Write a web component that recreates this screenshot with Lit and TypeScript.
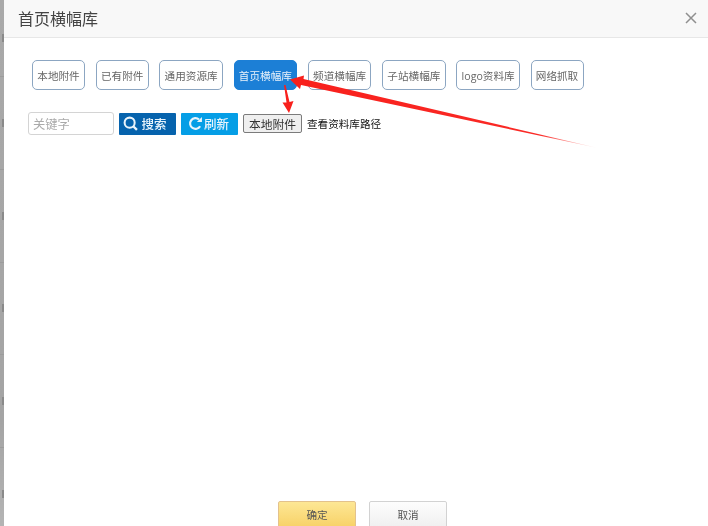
import { LitElement, html, css, svg } from "lit";
import { customElement } from "lit/decorators.js";

const tabs = ["本地附件", "已有附件", "通用资源库", "首页横幅库", "频道横幅库", "子站横幅库", "logo资料库", "网络抓取"];
const sideMarks = [true, true, true, true, true, true, true];

@customElement("app-root")
export class AppRoot extends LitElement {
  static styles = css`
    :host {
      display: block;
      position: relative;
      width: 708px;
      height: 526px;
      overflow: hidden;
      font-family: "Open Sans", "Noto Sans CJK SC", sans-serif;
      background: #fff;
    }
    .page { display: flex; height: 526px; filter: blur(0.3px); }
    .strip {
      width: 4px;
      flex: none;
      overflow: hidden;
      display: flex;
      flex-direction: column;
      background: linear-gradient(#a9a9a9, #a4a4a4 80%, #b4b4b4);
    }
    .strip-row {
      flex: none;
      height: 92.750px;
      box-sizing: border-box;
      border-bottom: 1px solid #9c9c9c;
      display: flex;
      align-items: center;
      justify-content: flex-end;
    }
    .strip-row:first-child { height: 77px; }
    .mark { width: 2px; height: 8px; background: #8a8a8a; }
    .dialog {
      flex: 1;
      min-width: 0;
      display: flex;
      flex-direction: column;
      background: #fff;
    }
    .header {
      height: 38px;
      flex: none;
      box-sizing: border-box;
      background: #f8f8f8;
      border-bottom: 1px solid #e7e7e7;
      display: flex;
      align-items: center;
      justify-content: space-between;
      padding: 0 11px 2px 14px;
    }
    .title { font-size: 16px; color: #444; }
    .close { width: 12px; height: 12px; display: block; }
    .body { flex: 1; padding: 22px 0 0 24px; min-height: 0; }
    .tabs { display: flex; gap: 10.700px; padding-left: 4px; }
    .tab {
      box-sizing: border-box;
      height: 30px;
      padding: 0 4.300px;
      display: flex;
      align-items: center;
      border: 1px solid #8ca6c2;
      border-radius: 5px;
      font-size: 10.600px;
      color: #666;
      background: #fff;
      white-space: nowrap;
    }
    .tab.active { background: #1c7fd6; border-color: #1c7fd6; color: #e8f2fb; }
    .tools { display: flex; align-items: center; margin-top: 22px; height: 23px; }
    .input {
      box-sizing: border-box;
      width: 86px;
      height: 23px;
      border: 1px solid #d4d4d4;
      border-radius: 3px;
      padding-left: 4px;
      display: flex;
      align-items: center;
      font-size: 12.300px;
      color: #aaa;
      margin-right: 5px;
    }
    .btn {
      box-sizing: border-box;
      width: 57px;
      height: 22px;
      display: flex;
      align-items: center;
      justify-content: center;
      color: #e8f4fc;
      font-size: 12.500px;
      font-weight: 500;
      border-radius: 1px;
      margin-right: 5px;
    }
    .btn svg { width: 15px; height: 15px; display: block; flex: none; }
    .search { background: #0663ad; gap: 3px; padding-right: 5px; }
    .refresh { background: #059ee6; gap: 1px; padding-right: 2px; }
    .native {
      box-sizing: border-box;
      width: 59px;
      height: 19px;
      display: flex;
      align-items: center;
      justify-content: center;
      border: 1px solid #7b7b7b;
      border-radius: 2px;
      background: #efefef;
      color: #333;
      font-size: 11.800px;
      margin-right: 5px;
    }
    .path { font-size: 10.600px; color: #111; white-space: nowrap; }
    .footer { flex: none; height: 25px; display: flex; gap: 13px; padding-left: 274px; overflow: hidden; }
    .fbtn {
      flex: none;
      box-sizing: border-box;
      width: 78px;
      height: 30px;
      padding-bottom: 4px;
      display: flex;
      align-items: center;
      justify-content: center;
      font-size: 10.600px;
      border-radius: 2px;
      color: #555;
    }
    .ok { background: linear-gradient(#fde795, #f7cf62); border: 1px solid #e3c28c; }
    .cancel { background: linear-gradient(#fdfdfd, #eeeeee); border: 1px solid #d2d2d2; }
    .arrows { position: absolute; left: 0; top: 0; width: 708px; height: 526px; pointer-events: none; filter: blur(0.3px); }
  `;

  private arrows() {
    return svg`
      <defs>
        <linearGradient id="tail" gradientUnits="userSpaceOnUse" x1="300" y1="82" x2="600" y2="148">
          <stop offset="0" stop-color="#f8201c"/>
          <stop offset="0.8" stop-color="#fa2a26"/>
          <stop offset="1" stop-color="#fa2a26" stop-opacity="0"/>
        </linearGradient>
      </defs>
      <path d="M598 148 L303.500 79 L304 75.500 L290 79.500 L300 89 L301 85 Z" fill="url(#tail)"/>
      <path d="M284 85 L285.500 85 L289.500 102 L293.500 101 L289 113 L282.500 102.500 L286.500 102.500 Z" fill="#f8201c"/>
    `;
  }

  render() {
    return html`
      <div class="page">
        <div class="strip">
          ${sideMarks.map(() => html`<div class="strip-row"><div class="mark"></div></div>`)}
        </div>
        <div class="dialog">
          <div class="header">
            <div class="title">首页横幅库</div>
            <svg class="close" viewBox="0 0 12 12">
              <path d="M1 1 L11 11 M11 1 L1 11" stroke="#8f8f8f" stroke-width="1.500" fill="none"/>
            </svg>
          </div>
          <div class="body">
            <div class="tabs">
              ${tabs.map((t, i) => html`<div class="tab ${i === 3 ? "active" : ""}">${t}</div>`)}
            </div>
            <div class="tools">
              <div class="input">关键字</div>
              <div class="btn search">
                <svg viewBox="0 0 14 14">
                  <circle cx="6.200" cy="6.200" r="4.700" stroke="#eaf4fb" stroke-width="1.900" fill="none"/>
                  <path d="M9.800 9.800 L13 13" stroke="#eaf4fb" stroke-width="2.200"/>
                </svg>
                <span>搜索</span>
              </div>
              <div class="btn refresh">
                <svg viewBox="0 0 14 14">
                  <path d="M11.300 9.500 A5 5 0 1 1 10.300 3.300" stroke="#eaf4fb" stroke-width="2" fill="none"/>
                  <path d="M8.300 5.600 L13 5.600 L13 1 Z" fill="#eaf4fb"/>
                </svg>
                <span>刷新</span>
              </div>
              <div class="native">本地附件</div>
              <div class="path">查看资料库路径</div>
            </div>
          </div>
          <div class="footer">
            <div class="fbtn ok">确定</div>
            <div class="fbtn cancel">取消</div>
          </div>
        </div>
      </div>
      <svg class="arrows" viewBox="0 0 708 526">${this.arrows()}</svg>
    `;
  }
}
